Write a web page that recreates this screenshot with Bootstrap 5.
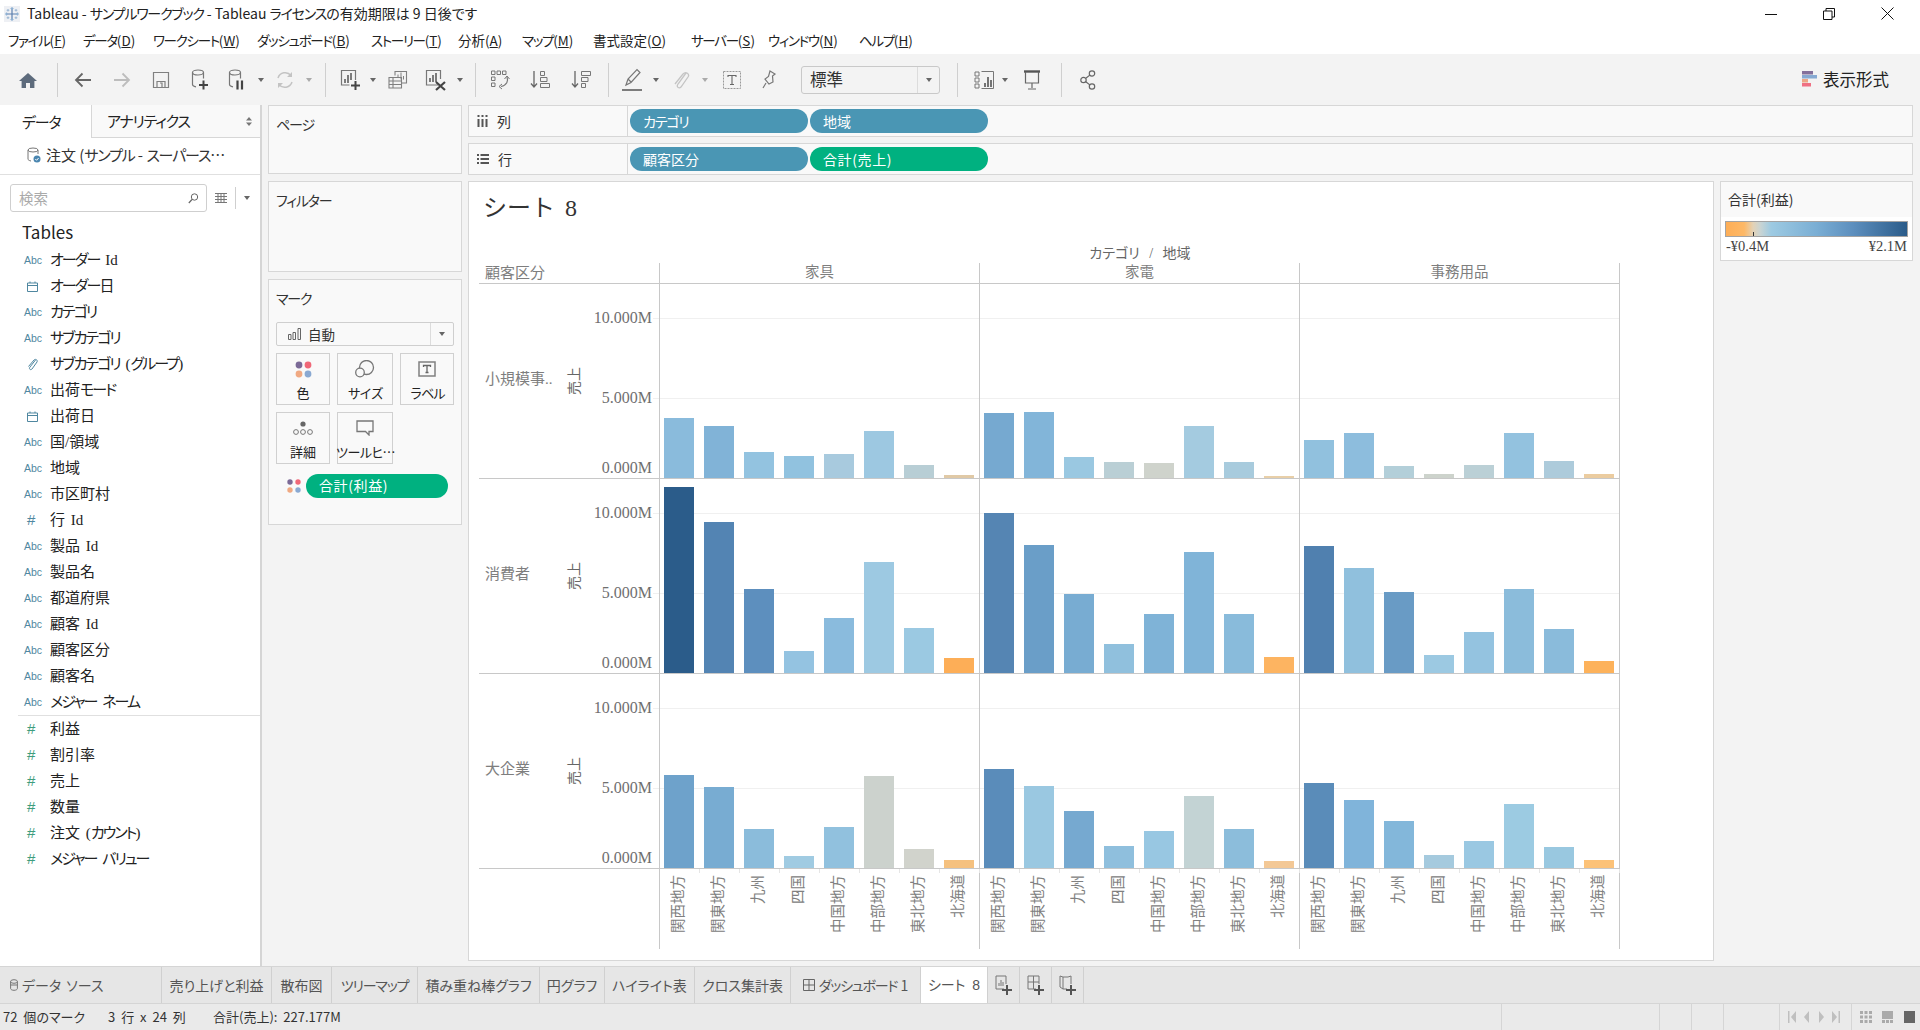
<!DOCTYPE html>
<html lang="ja">
<head>
<meta charset="utf-8">
<title>Tableau</title>
<link href="https://cdn.jsdelivr.net/npm/bootstrap@5.3.0/dist/css/bootstrap.min.css" rel="stylesheet">
<style>
html,body{height:1030px;overflow:hidden}
body{width:1920px;font-family:"Noto Sans CJK JP","Noto Sans",sans-serif;font-feature-settings:"palt";color:#333;background:#fff;font-size:14px;line-height:1.2}
svg{display:block;flex:none}
.ka{letter-spacing:-1.2px}
.title-bar{height:27px;padding-left:4px}
.title-bar .ttl{font-size:14px;margin-left:7px;color:#222}
.win-ctl{margin-left:auto;gap:46px;padding-right:26px}
.menu-bar{height:27px;padding-left:8px;display:grid;align-items:center;grid-template-columns:75px 70px 104px 114px 87px 64px 71px 98px 77px 91px auto;justify-content:start;font-size:13.5px;color:#222}
.menu-bar .ka{letter-spacing:-1.3px}
.tool-bar{height:51px;background:#f3f3f3;padding-left:8px;display:grid;align-items:center;justify-items:center;grid-template-columns:40px 18px 34px 44px 34px 44px 30px 18px 30px 18px 14px 38px 6px 44px 32px 16px 14px 36px 44px 38px 16px 32px 16px 34px 14px 40px 34px 154px 34px 20px 22px 32px 26px 28px 1fr}
.tb-sep{width:1px;height:34px;background:#cfcfcf}
.tri{width:0;height:0;border-left:3.5px solid transparent;border-right:3.5px solid transparent;border-top:4px solid #666}
.tri.off{border-top-color:#aaa}
.fit-box{justify-self:end;width:139px;height:28px;border:1px solid #c9c9c9;border-radius:3px;font-size:16.5px;padding-left:8px;color:#333}
.fit-box .cap{width:22px;align-self:stretch;border-left:1px solid #dcdcdc;margin-left:auto}
.show-me{justify-self:end;padding-right:31px;font-size:16.5px;gap:6px;color:#222}
.work{height:862px;background:#f3f3f3;border-bottom:1px solid #d5d5d5}
.side{width:262px;background:#fff;border-right:2px solid #d5d5d5;flex:none}
.tab-data{width:92px;height:33px;padding-left:22px;font-size:15px;color:#222;border-right:1px solid #d7d7d7}
.tab-ana{flex:1;height:33px;padding:0 8px 0 15px;font-size:15px;color:#222;background:#f9f9f9;border-bottom:1px solid #d7d7d7}
.src-row{height:37px;padding-left:27px;padding-bottom:2px;gap:5px;font-size:15px;border-bottom:1px solid #e0e0e0;color:#333}
.find-row{margin-top:9px;height:28px;padding-left:10px}
.find-box{width:197px;height:28px;border:1px solid #cfcfcf;border-radius:3px;padding:0 7px 0 8px;color:#aaa;font-size:14.5px}
.find-sep{height:22px}
.tbl-head{margin-top:6px;height:29px;padding-left:22px;padding-bottom:1px;font-size:17px;color:#222}
.fld{height:26px;padding-left:24px;font-family:"Liberation Serif","Noto Sans CJK JP",serif;font-size:15px;word-spacing:2px;color:#222}
.fld .ka{letter-spacing:-1.9px}
.fld .ico{width:26px;flex:none;color:#4f87a0;font-family:"Liberation Sans",sans-serif;font-size:10.5px}
.fld .ico.grn{color:#3f9d7d;font-size:15px;padding-left:3px}
.fld .ico.hsh{font-size:15px;padding-left:3px}
.fld .ico.svgi{padding-left:3px}
.fld-line{height:1px;background:#e0e0e0;margin-left:18px}
.cards{width:206px;flex:none;padding-left:6px;padding-right:6px;gap:7px}
.pane-box{background:#f9f9f9;border:1px solid #d7d7d7;color:#333;padding:10px 7px;font-size:14px}
.pb-page{height:69px}
.pb-filter{height:91px}
.pb-mark{height:246px}
.mk-sel{margin-top:15px;height:24px;background:#f9f9f9;border:1px solid #cfcfcf;border-radius:2px;padding-left:11px;font-size:13.5px;gap:7px;color:#333}
.mk-sel .cap{width:23px;align-self:stretch;border-left:1px solid #dcdcdc;margin-left:auto}
.mk-grid{display:grid;grid-template-columns:54px 56px 54px;column-gap:7px;row-gap:7px;margin-top:7px}
.mk-btn{height:52px;padding:0;border:1px solid #d0d0d0;border-radius:0;background:#f9f9f9;color:#222;font-size:13px;line-height:1.2;white-space:nowrap;--bs-btn-hover-bg:#f9f9f9}
.mk-btn .ic{height:31px;flex:none}
.mk-btn .ka{letter-spacing:-1.3px}
.mk-pill-row{margin-top:10px;padding-left:11px;gap:5px}
.chip{height:24px;border-radius:12px;color:#fff;font-size:14px;padding-left:13px}
.chip.dim{width:178px;background:#4a96b4}
.chip.grn{width:178px;background:#00b180;letter-spacing:.6px}
.chip.wide{width:142px;background:#00b180;letter-spacing:.6px}
.right-col{flex:1;padding-right:7px;gap:6px;min-width:0}
.shelf{height:32px;background:#f9f9f9;border:1px solid #d7d7d7}
.shelf .lb{width:159px;height:100%;padding-left:8px;gap:9px;border-right:1px solid #d7d7d7;font-size:14px;color:#333}
.shelf .pills{gap:2px;padding-left:2px}
.view-row{height:780px;gap:6px}
.sheet{width:1246px;background:#fff;border:1px solid #d7d7d7;flex:none}
.sheet-ttl{height:52px;padding-left:14px;font-family:"Liberation Serif","Noto Sans CJK JP",serif;font-size:24px;font-feature-settings:normal;word-spacing:4px;color:#333}
.viz{margin-left:10px;font-family:"Liberation Serif","Noto Sans CJK JP",serif;color:#7e7e7e;font-size:15px}
.viz-cap{height:29px;padding-top:11px;font-size:14px;line-height:18px;word-spacing:6px;text-align:center;margin-left:181px;width:960px;color:#666}
.viz-grid{display:grid;grid-template-columns:181px 320px 320px 320px;grid-template-rows:21px 195px 195px 195px 80px}
.hd{border-bottom:1px solid #c8c8c8;border-right:1px solid #c8c8c8;padding-top:1px;text-align:center;font-size:14.5px}
.hd.first{text-align:left;padding-left:6px;font-size:15px}
.rh{border-bottom:1px solid #c8c8c8;border-right:1px solid #c8c8c8;background:repeating-linear-gradient(to top,transparent 0 79px,#f0f0f0 79px 80px) right top/6px 100% no-repeat}
.rh .nm{width:82px;padding-left:6px;padding-bottom:4px}
.rh .at{width:28px;font-size:14px;color:#666}
.rh .at span{writing-mode:vertical-rl;text-orientation:sideways;transform:rotate(180deg)}
.rh .tk{width:63px;padding-top:24px;font-size:16px;text-align:right;color:#6f6f6f;line-height:20px}
.rh .tk div{height:20px;margin-top:60px}
.rh .tk div:first-child{margin-top:0}
.rh .tk div:last-child{margin-top:50px}
.pn{border-bottom:1px solid #c8c8c8;border-right:1px solid #c8c8c8;display:flex;align-items:flex-end;gap:10px;padding-left:4px;background:repeating-linear-gradient(to top,transparent 0 79px,#f0f0f0 79px 80px)}
.vb{display:block;width:30px;flex:none}
.xs{display:flex;border-right:1px solid #c8c8c8}
.xc{width:40px;height:100%;flex:none;display:flex;justify-content:center;background:linear-gradient(#e6e6e6,#e6e6e6) right top/1px 4px no-repeat}
.xc span{writing-mode:vertical-rl;text-orientation:sideways;transform:rotate(180deg);text-align:end;height:100%;padding-bottom:6px;margin-right:4px;font-size:14.5px;line-height:20px;color:#808080;width:20px}
.legend{width:193px;height:80px;background:#fff;border:1px solid #d7d7d7;flex:none}
.lg-head{height:35px;background:#f9f9f9;padding-left:7px;font-size:14px;color:#333}
.lg-bar{height:16px;margin:4px 4px 0 4px;border:1px solid #a3a3a3;background:linear-gradient(to right,#fdae57 0,#fdb866 10%,#e3d2b6 15%,#c9d4d3 19%,#9dcae2 25%,#7aaed4 50%,#5d8fbe 70%,#2b5c8a 100%);position:relative}
.lg-tick{position:absolute;left:27px;bottom:0;width:1px;height:4px;background:#333}
.lg-lab{padding:0 5px;font-family:"Liberation Serif",serif;font-size:14.5px;color:#444;line-height:18px}
.tab-bar{height:37px;background:#e6e6e6;border-bottom:1px solid #d5d5d5;display:grid;grid-template-columns:162px 110px 60px 86px 122px 65px 90px 96px 130px 67px 32px 32px 32px 1fr;font-size:14px;color:#555}
.tab-bar>div{border-right:1px solid #d0d0d0;display:flex;align-items:center;justify-content:center;gap:4px}
.tab-bar>div:last-child{border-right:0}
.tab-bar .cur{background:#fff;color:#555;word-spacing:3px;font-family:"Liberation Sans","Noto Sans CJK JP",sans-serif}
.tab-bar .src{justify-content:flex-start;padding-left:10px;gap:4px;word-spacing:2px}
.st-bar{height:26px;background:#eaeaea;padding-left:3px;display:grid;grid-template-columns:105px 105px 1288px 158px 32px 32px 56px 72px 1fr;font-size:13px;word-spacing:3px;color:#333}
.st-bar>div{display:flex;align-items:center}
.st-bar .cell{border-left:1px solid #d5d5d5}
</style>
</head>
<body class="d-flex flex-column">

<div class="title-bar d-flex align-items-center">
  <svg width="16" height="16" viewBox="0 0 16 16"><rect width="16" height="16" fill="#eef0f4"/><g stroke-width="1.2"><path d="M8 3v10M3 8h10" stroke="#5b7fae"/><path d="M8 1v3M6.5 2.5h3M8 12v3M6.5 13.5h3" stroke="#8fb1d3"/><path d="M1 8h3M2.5 6.5v3M12 8h3M13.5 6.5v3" stroke="#8fb1d3"/><path d="M4 3v2.6M2.7 4.3h2.6M12 3v2.6M10.7 4.3h2.6M4 10.4V13M2.7 11.7h2.6M12 10.4V13M10.7 11.7h2.6" stroke="#a4bcd6"/></g></svg>
  <span class="ttl">Tableau - <span class="ka">サンプルワークブック</span> - Tableau <span class="ka">ライセンス</span>の有効期限は 9 日後です</span>
  <div class="win-ctl d-flex align-items-center">
    <svg width="12" height="12" viewBox="0 0 12 12"><path d="M0 6.5h12" stroke="#111" stroke-width="1"/></svg>
    <svg width="12" height="12" viewBox="0 0 12 12"><path d="M.5 3h8.500v8.500H.5zM3 3V.5h8.500V9H9" fill="none" stroke="#111"/></svg>
    <svg width="13" height="13" viewBox="0 0 13 13"><path d="M.5.5l12 12M12.5.5l-12 12" stroke="#111"/></svg>
  </div>
</div>

<div class="menu-bar">
  <span><span class="ka">ファイル</span>(<u>F</u>)</span><span><span class="ka">データ</span>(<u>D</u>)</span><span><span class="ka">ワークシート</span>(<u>W</u>)</span><span><span class="ka">ダッシュボード</span>(<u>B</u>)</span><span><span class="ka">ストーリー</span>(<u>T</u>)</span><span>分析(<u>A</u>)</span><span><span class="ka">マップ</span>(<u>M</u>)</span><span>書式設定(<u>O</u>)</span><span><span class="ka">サーバー</span>(<u>S</u>)</span><span><span class="ka">ウィンドウ</span>(<u>N</u>)</span><span><span class="ka">ヘルプ</span>(<u>H</u>)</span>
</div>

<div class="tool-bar">
  <svg width="20" height="20" viewBox="0 0 20 20"><path d="M10 3l9 8h-2.6v7H12v-5H8v5H3.6v-7H1z" fill="#5d6b7c"/></svg>
  <div class="tb-sep"></div>
  <svg width="18" height="16" viewBox="0 0 18 16"><path d="M17 8H2M8.500 1.500L2 8l6.500 6.500" fill="none" stroke="#666" stroke-width="1.800"/></svg>
  <svg width="18" height="16" viewBox="0 0 18 16"><path d="M1 8h15M9.500 1.500L16 8l-6.500 6.500" fill="none" stroke="#bdbdbd" stroke-width="1.800"/></svg>
  <svg width="18" height="18" viewBox="0 0 18 18"><path d="M1.500 1.500h15v15h-15zM5 16.500v-6h8v6M8 12h2v4" fill="none" stroke="#808080" stroke-width="1.200"/></svg>
  <svg width="20" height="22" viewBox="0 0 20 22"><ellipse cx="8" cy="3.500" rx="5.500" ry="2.500" fill="none" stroke="#777" stroke-width="1.200"/><path d="M2.500 3.500v12c0 1.400 2 2 3.500 2.300M13.500 3.500v6" fill="none" stroke="#777" stroke-width="1.200"/><path d="M9 16h9M13.500 11.500v9" stroke="#444" stroke-width="2"/></svg>
  <svg width="20" height="22" viewBox="0 0 20 22"><ellipse cx="8" cy="3.500" rx="5.500" ry="2.500" fill="none" stroke="#777" stroke-width="1.200"/><path d="M2.500 3.500v12c0 1.400 2 2 3.500 2.300M13.500 3.500v6" fill="none" stroke="#777" stroke-width="1.200"/><path d="M10.500 11.500v9M15 11.500v9" stroke="#444" stroke-width="2.200"/></svg>
  <div class="tri"></div>
  <svg width="20" height="20" viewBox="0 0 20 20"><path d="M3 8a7.500 7.500 0 0 1 13-2.500M17 12a7.500 7.500 0 0 1-13 2.500" fill="none" stroke="#c3c3c3" stroke-width="1.500"/><path d="M17 2v5h-5zM3 18v-5h5z" fill="#c3c3c3"/></svg>
  <div class="tri off"></div>
  <div class="tb-sep"></div>
  <svg width="22" height="22" viewBox="0 0 22 22"><path d="M15.500 11V1.500h-14V16h8" fill="none" stroke="#777" stroke-width="1.200"/><path d="M5 14V10M8 14V6M11 11V4" stroke="#555" stroke-width="1.500"/><path d="M11 16.500h9M15.500 12v9" stroke="#444" stroke-width="2"/></svg>
  <div class="tri"></div>
  <svg width="20" height="20" viewBox="0 0 20 20"><path d="M7 5.500V1.500h11.500V13H14" fill="none" stroke="#808080" stroke-width="1.100"/><path d="M10 4.500v3M13 2.500v7M15.500 6v3.500" stroke="#808080" stroke-width="1"/><path d="M1 7.500h12.500V18H1zM1 11h12.500M1 14.500h12.500M5 7.500V18" fill="none" stroke="#808080" stroke-width="1.100"/></svg>
  <svg width="22" height="22" viewBox="0 0 22 22"><path d="M13 16H1.500V1.500h14V10" fill="none" stroke="#777" stroke-width="1.200"/><path d="M5 13V9M8 13V6M11 13V4" stroke="#555" stroke-width="1.500"/><path d="M11 13l9 8M20 13l-9 8" stroke="#444" stroke-width="2.200"/></svg>
  <div class="tri"></div>
  <div class="tb-sep"></div>
  <svg width="20" height="20" viewBox="0 0 20 20"><path d="M1.500 1h3.500v3.500H1.500zM7 1h3.500v3.500H7zM12.500 1H16v3.500h-3.500zM1.500 7H5v3.500H1.500zM1.500 13H5v3.500H1.500z" fill="none" stroke="#777"/><path d="M17 7c1.500 4 0 8-6 9.500" fill="none" stroke="#777" stroke-width="1.200"/><path d="M14.500 9l2.500-3 2.500 3M12 14l-3 2.500 3 2.500" fill="none" stroke="#777"/></svg>
  <svg width="20" height="20" viewBox="0 0 20 20"><path d="M4 1v16M1 13.500L4 17l3-3.500" fill="none" stroke="#666" stroke-width="1.300"/><path d="M10.500 1.500h4v4h-4zM10.500 7.500h6.500v4h-6.500zM10.500 13.500h9v4h-9z" fill="none" stroke="#777"/></svg>
  <svg width="20" height="20" viewBox="0 0 20 20"><path d="M4 1v16M1 13.500L4 17l3-3.500" fill="none" stroke="#666" stroke-width="1.300"/><path d="M10.500 1.500h9v4h-9zM10.500 7.500h6.500v4h-6.500zM10.500 13.500h4v4h-4z" fill="none" stroke="#777"/></svg>
  <div class="tb-sep"></div>
  <svg width="22" height="24" viewBox="0 0 22 24"><path d="M5 17l2-6L16 1.500l3 3L10 14.500zM7 11l3 3" fill="none" stroke="#777" stroke-width="1.200"/><path d="M1 22h20" stroke="#555" stroke-width="1.500"/></svg>
  <div class="tri"></div>
  <svg width="18" height="22" viewBox="0 0 18 22"><path d="M14 4L6 15c-2 3 1 5 3 3l7-10c2-3-2-6-5-3L3 15" fill="none" stroke="#c4c4c4" stroke-width="1.300"/></svg>
  <div class="tri off"></div>
  <svg width="18" height="18" viewBox="0 0 18 18"><rect x=".5" y=".5" width="17" height="17" fill="none" stroke="#999" stroke-dasharray="2 1"/><path d="M5 6V4.500h8V6M9 4.500v9M7 13.500h4" fill="none" stroke="#666" stroke-width="1.100"/></svg>
  <svg width="16" height="20" viewBox="0 0 16 20"><path d="M9 1l5 3-2.500 2 .5 6-4 2-4-5 3.500-2.500zM5 13l-3 5" fill="none" stroke="#777" stroke-width="1.200"/></svg>
  <div class="fit-box d-flex align-items-center"><span>標準</span><span class="cap d-flex align-items-center justify-content-center"><span class="tri"></span></span></div>
  <div class="tb-sep"></div>
  <svg width="20" height="18" viewBox="0 0 20 18"><path d="M1 1h4v4H1zM1 7h4v4H1zM1 13h4v4H1zM7.500 .5H19.500V17.500H7.500" fill="none" stroke="#777"/><path d="M11 16v-4M14 16V6M17 16v-7" stroke="#555" stroke-width="1.600"/></svg>
  <div class="tri"></div>
  <svg width="18" height="20" viewBox="0 0 18 20"><path d="M1 1.500h16" stroke="#555" stroke-width="2.400"/><path d="M2.500 2v11h13V2M9 13v5M5 19h8" fill="none" stroke="#666" stroke-width="1.200"/></svg>
  <div class="tb-sep"></div>
  <svg width="16" height="20" viewBox="0 0 16 20"><circle cx="12" cy="3.500" r="2.700" fill="none" stroke="#666" stroke-width="1.200"/><circle cx="3.500" cy="10" r="2.700" fill="none" stroke="#666" stroke-width="1.200"/><circle cx="12" cy="16.500" r="2.700" fill="none" stroke="#666" stroke-width="1.200"/><path d="M5.800 8.300l4-3.200M5.800 11.700l4 3.200" stroke="#666" stroke-width="1.200"/></svg>
  <div class="show-me d-flex align-items-center">
    <svg width="15" height="16" viewBox="0 0 15 16"><rect width="11" height="3.500" fill="#83709b"/><rect y="4" width="15" height="3.500" fill="#86a9d2"/><rect y="8" width="6" height="3.500" fill="#eda786"/><rect y="12" width="9" height="3.500" fill="#ef7083"/></svg>
    <span>表示形式</span>
  </div>
</div>

<div class="work d-flex">
  <aside class="side">
    <div class="d-flex">
      <div class="tab-data d-flex align-items-center"><span class="ka">データ</span></div>
      <div class="tab-ana d-flex align-items-center justify-content-between"><span class="ka">アナリティクス</span><svg width="6" height="9" viewBox="0 0 6 9"><path d="M3 0l3 3.500H0zM3 9l3-3.500H0z" fill="#777"/></svg></div>
    </div>
    <div class="src-row d-flex align-items-center">
      <svg width="14" height="16" viewBox="0 0 14 16"><ellipse cx="6" cy="3" rx="5" ry="2" fill="none" stroke="#777"/><path d="M1 3v9c0 1 1 1.500 3 2M11 3v4" fill="none" stroke="#777"/><circle cx="10" cy="12" r="3.500" fill="#4a86b0"/><path d="M8.300 12l1.300 1.300 2-2.300" fill="none" stroke="#fff"/></svg>
      <span>注文 (<span class="ka">サンプル</span> - <span class="ka">スーパース</span>…</span>
    </div>
    <div class="find-row d-flex align-items-center">
      <div class="find-box d-flex align-items-center justify-content-between"><span>検索</span><svg width="11" height="11" viewBox="0 0 11 11"><circle cx="6.500" cy="4" r="3.200" fill="none" stroke="#666"/><path d="M4 6.500L.8 10" stroke="#666" stroke-width="1.200"/></svg></div>
      <svg class="ms-2" width="12" height="10" viewBox="0 0 12 10"><path d="M0 .5h12M0 3.500h12M0 6.500h12M0 9.500h12M3 0v10M6 0v10M9 0v10" stroke="#777"/></svg>
      <div class="tb-sep find-sep ms-2"></div>
      <div class="tri ms-2"></div>
    </div>
    <div class="tbl-head d-flex align-items-center">Tables</div>
    <div class="fld d-flex align-items-center"><span class="ico">Abc</span><span><span class="ka">オーダー</span> Id</span></div>
    <div class="fld d-flex align-items-center"><span class="ico svgi"><svg width="11" height="11" viewBox="0 0 11 11"><path d="M.5 2h10v8.500H.5zM.5 4.500h10M3 .5V2M8 .5V2" fill="none" stroke="#4f87a0"/></svg></span><span><span class="ka">オーダー</span>日</span></div>
    <div class="fld d-flex align-items-center"><span class="ico">Abc</span><span class="ka">カテゴリ</span></div>
    <div class="fld d-flex align-items-center"><span class="ico">Abc</span><span class="ka">サブカテゴリ</span></div>
    <div class="fld d-flex align-items-center"><span class="ico svgi"><svg width="11" height="13" viewBox="0 0 11 13"><path d="M8.500 2L3 9c-1.500 2 .5 3.500 2 2l5-7c1-2-1.500-3.500-3-2L1.500 8.500" fill="none" stroke="#4f87a0"/></svg></span><span><span class="ka">サブカテゴリ</span> (<span class="ka">グループ</span>)</span></div>
    <div class="fld d-flex align-items-center"><span class="ico">Abc</span><span>出荷<span class="ka">モード</span></span></div>
    <div class="fld d-flex align-items-center"><span class="ico svgi"><svg width="11" height="11" viewBox="0 0 11 11"><path d="M.5 2h10v8.500H.5zM.5 4.500h10M3 .5V2M8 .5V2" fill="none" stroke="#4f87a0"/></svg></span>出荷日</div>
    <div class="fld d-flex align-items-center"><span class="ico">Abc</span>国/領域</div>
    <div class="fld d-flex align-items-center"><span class="ico">Abc</span>地域</div>
    <div class="fld d-flex align-items-center"><span class="ico">Abc</span>市区町村</div>
    <div class="fld d-flex align-items-center"><span class="ico hsh">#</span>行 Id</div>
    <div class="fld d-flex align-items-center"><span class="ico">Abc</span>製品 Id</div>
    <div class="fld d-flex align-items-center"><span class="ico">Abc</span>製品名</div>
    <div class="fld d-flex align-items-center"><span class="ico">Abc</span>都道府県</div>
    <div class="fld d-flex align-items-center"><span class="ico">Abc</span>顧客 Id</div>
    <div class="fld d-flex align-items-center"><span class="ico">Abc</span>顧客区分</div>
    <div class="fld d-flex align-items-center"><span class="ico">Abc</span>顧客名</div>
    <div class="fld d-flex align-items-center"><span class="ico">Abc</span><span><span class="ka">メジャー</span> <span class="ka">ネーム</span></span></div>
    <div class="fld-line"></div>
    <div class="fld d-flex align-items-center"><span class="ico grn">#</span>利益</div>
    <div class="fld d-flex align-items-center"><span class="ico grn">#</span>割引率</div>
    <div class="fld d-flex align-items-center"><span class="ico grn">#</span>売上</div>
    <div class="fld d-flex align-items-center"><span class="ico grn">#</span>数量</div>
    <div class="fld d-flex align-items-center"><span class="ico grn">#</span><span>注文 (<span class="ka">カウント</span>)</span></div>
    <div class="fld d-flex align-items-center"><span class="ico grn">#</span><span><span class="ka">メジャー</span> <span class="ka">バリュー</span></span></div>
  </aside>

  <div class="cards d-flex flex-column">
    <div class="pane-box pb-page"><span class="ka">ページ</span></div>
    <div class="pane-box pb-filter"><span class="ka">フィルター</span></div>
    <div class="pane-box pb-mark">
      <div><span class="ka">マーク</span></div>
      <div class="mk-sel d-flex align-items-center">
        <svg width="13" height="12" viewBox="0 0 13 12"><path d="M.5 6.500h2.500v5H.5zM5 4.500h2.500v7H5zM10 .5h2.500v11H10z" fill="none" stroke="#666"/></svg>
        <span>自動</span>
        <span class="cap d-flex align-items-center justify-content-center"><span class="tri"></span></span>
      </div>
      <div class="mk-grid">
        <button class="btn mk-btn d-flex flex-column align-items-center"><span class="ic d-flex align-items-center"><svg width="17" height="17" viewBox="0 0 17 17"><circle cx="4" cy="4" r="3.400" fill="#7b6a97"/><circle cx="13" cy="4" r="3.400" fill="#f06878"/><circle cx="4" cy="13" r="3.400" fill="#f0a982"/><circle cx="13" cy="13" r="3.400" fill="#8aa9d2"/></svg></span>色</button>
        <button class="btn mk-btn d-flex flex-column align-items-center"><span class="ic d-flex align-items-center"><svg width="20" height="18" viewBox="0 0 20 18"><circle cx="11.500" cy="7.500" r="7" fill="none" stroke="#777" stroke-width="1.300"/><circle cx="5" cy="12.500" r="4.300" fill="#f9f9f9" stroke="#777" stroke-width="1.300"/></svg></span><span class="ka">サイズ</span></button>
        <button class="btn mk-btn d-flex flex-column align-items-center"><span class="ic d-flex align-items-center"><svg width="18" height="16" viewBox="0 0 18 16"><rect x="1" y="1" width="16" height="14" fill="none" stroke="#808080" stroke-width="1.500"/><path d="M5.500 6V4.500h7V6M9 4.500V11.500M7.500 11.500h3" fill="none" stroke="#666" stroke-width="1.300"/></svg></span><span class="ka">ラベル</span></button>
        <button class="btn mk-btn d-flex flex-column align-items-center"><span class="ic d-flex align-items-center"><svg width="20" height="16" viewBox="0 0 20 16"><circle cx="10" cy="4" r="2.600" fill="#666"/><circle cx="3" cy="12" r="2.400" fill="none" stroke="#777"/><circle cx="10" cy="12" r="2.400" fill="none" stroke="#777"/><circle cx="17" cy="12" r="2.400" fill="none" stroke="#777"/></svg></span>詳細</button>
        <button class="btn mk-btn d-flex flex-column align-items-center"><span class="ic d-flex align-items-center"><svg width="18" height="16" viewBox="0 0 18 16"><path d="M1 1h16v10.500h-4v3.500l-3.500-3.500H1z" fill="none" stroke="#777" stroke-width="1.300"/></svg></span><span class="ka">ツールヒ…</span></button>
      </div>
      <div class="mk-pill-row d-flex align-items-center">
        <svg width="14" height="14" viewBox="0 0 14 14"><circle cx="3" cy="3" r="2.700" fill="#7b6a97"/><circle cx="11" cy="3" r="2.700" fill="#f06878"/><circle cx="3" cy="11" r="2.700" fill="#f0a982"/><circle cx="11" cy="11" r="2.700" fill="#8aa9d2"/></svg>
        <div class="chip wide d-flex align-items-center">合計(利益)</div>
      </div>
    </div>
  </div>

  <div class="right-col d-flex flex-column">
    <div class="shelf d-flex align-items-center">
      <div class="lb d-flex align-items-center"><svg width="11" height="12" viewBox="0 0 11 12"><path d="M1.500 4v8M5.500 4v8M9.500 4v8" stroke="#555" stroke-width="2"/><path d="M1.500 0v2M5.500 0v2M9.500 0v2" stroke="#555" stroke-width="2"/></svg>列</div>
      <div class="pills d-flex"><div class="chip dim d-flex align-items-center"><span class="ka">カテゴリ</span></div><div class="chip dim d-flex align-items-center">地域</div></div>
    </div>
    <div class="shelf d-flex align-items-center">
      <div class="lb d-flex align-items-center"><svg width="12" height="10" viewBox="0 0 12 10"><path d="M0 1h2M3.500 1H12M0 5h2M3.500 5H12M0 9h2M3.500 9H12" stroke="#555" stroke-width="2"/></svg>行</div>
      <div class="pills d-flex"><div class="chip dim d-flex align-items-center">顧客区分</div><div class="chip grn d-flex align-items-center">合計(売上)</div></div>
    </div>
    <div class="view-row d-flex align-items-start">
      <section class="sheet h-100">
        <div class="sheet-ttl d-flex align-items-center">シート 8</div>
        <div class="viz">
          <div class="viz-cap">カテゴリ / 地域</div>
          <div class="viz-grid">
            <div class="hd first">顧客区分</div><div class="hd">家具</div><div class="hd">家電</div><div class="hd">事務用品</div>

            <div class="rh d-flex"><div class="nm d-flex align-items-center">小規模事..</div><div class="at d-flex align-items-center justify-content-center"><span>売上</span></div><div class="tk"><div>10.000M</div><div>5.000M</div><div>0.000M</div></div></div>
            <div class="pn"><i class="vb" style="height:60px;background:#8abbdc"></i><i class="vb" style="height:52px;background:#81b3d7"></i><i class="vb" style="height:26px;background:#93c3e0"></i><i class="vb" style="height:22px;background:#91c2df"></i><i class="vb" style="height:24px;background:#a8cade"></i><i class="vb" style="height:47px;background:#9dc8e1"></i><i class="vb" style="height:13px;background:#b8ced5"></i><i class="vb" style="height:3px;background:#e0c9a6"></i></div>
            <div class="pn"><i class="vb" style="height:65px;background:#76a9d0"></i><i class="vb" style="height:66px;background:#82b5d9"></i><i class="vb" style="height:21px;background:#9ac8e1"></i><i class="vb" style="height:16px;background:#bacfd5"></i><i class="vb" style="height:15px;background:#cfd3cc"></i><i class="vb" style="height:52px;background:#a4cbe0"></i><i class="vb" style="height:16px;background:#a8cbdd"></i><i class="vb" style="height:2px;background:#e8cfa8"></i></div>
            <div class="pn"><i class="vb" style="height:38px;background:#91c1de"></i><i class="vb" style="height:45px;background:#8dbddd"></i><i class="vb" style="height:12px;background:#b3cfd9"></i><i class="vb" style="height:4px;background:#cdd3cc"></i><i class="vb" style="height:13px;background:#bbd0d6"></i><i class="vb" style="height:45px;background:#93c2df"></i><i class="vb" style="height:17px;background:#adcbdb"></i><i class="vb" style="height:4px;background:#ebcca0"></i></div>

            <div class="rh d-flex"><div class="nm d-flex align-items-center">消費者</div><div class="at d-flex align-items-center justify-content-center"><span>売上</span></div><div class="tk"><div>10.000M</div><div>5.000M</div><div>0.000M</div></div></div>
            <div class="pn"><i class="vb" style="height:186px;background:#2b5c8a"></i><i class="vb" style="height:151px;background:#5384b3"></i><i class="vb" style="height:84px;background:#5d8fbe"></i><i class="vb" style="height:22px;background:#94c3e1"></i><i class="vb" style="height:55px;background:#8abbdd"></i><i class="vb" style="height:111px;background:#9dc9e2"></i><i class="vb" style="height:45px;background:#9bc9e2"></i><i class="vb" style="height:15px;background:#fdae57"></i></div>
            <div class="pn"><i class="vb" style="height:160px;background:#5585b3"></i><i class="vb" style="height:128px;background:#6a9ec8"></i><i class="vb" style="height:79px;background:#78acd2"></i><i class="vb" style="height:29px;background:#90c0dd"></i><i class="vb" style="height:59px;background:#7fb3d7"></i><i class="vb" style="height:121px;background:#80b4d8"></i><i class="vb" style="height:59px;background:#89bbdb"></i><i class="vb" style="height:16px;background:#fdb461"></i></div>
            <div class="pn"><i class="vb" style="height:127px;background:#5080af"></i><i class="vb" style="height:105px;background:#90c0dd"></i><i class="vb" style="height:81px;background:#699bc5"></i><i class="vb" style="height:18px;background:#9cc9e2"></i><i class="vb" style="height:41px;background:#94c3e0"></i><i class="vb" style="height:84px;background:#8bbcdb"></i><i class="vb" style="height:44px;background:#8abbdb"></i><i class="vb" style="height:12px;background:#fdb25b"></i></div>

            <div class="rh d-flex"><div class="nm d-flex align-items-center">大企業</div><div class="at d-flex align-items-center justify-content-center"><span>売上</span></div><div class="tk"><div>10.000M</div><div>5.000M</div><div>0.000M</div></div></div>
            <div class="pn"><i class="vb" style="height:93px;background:#6ea2cb"></i><i class="vb" style="height:81px;background:#78acd2"></i><i class="vb" style="height:39px;background:#8bbcdb"></i><i class="vb" style="height:12px;background:#a0cbe2"></i><i class="vb" style="height:41px;background:#91c1de"></i><i class="vb" style="height:92px;background:#ccd2cd"></i><i class="vb" style="height:19px;background:#d1d3cc"></i><i class="vb" style="height:8px;background:#f5c17f"></i></div>
            <div class="pn"><i class="vb" style="height:99px;background:#5a8cba"></i><i class="vb" style="height:82px;background:#9ac8e1"></i><i class="vb" style="height:57px;background:#76a9d0"></i><i class="vb" style="height:22px;background:#8fbfdd"></i><i class="vb" style="height:37px;background:#98c7e2"></i><i class="vb" style="height:72px;background:#c3d3d4"></i><i class="vb" style="height:39px;background:#8cbddb"></i><i class="vb" style="height:7px;background:#f3c896"></i></div>
            <div class="pn"><i class="vb" style="height:85px;background:#5a8cb9"></i><i class="vb" style="height:68px;background:#80b4da"></i><i class="vb" style="height:47px;background:#83b7da"></i><i class="vb" style="height:13px;background:#a5cade"></i><i class="vb" style="height:27px;background:#9ac8e2"></i><i class="vb" style="height:64px;background:#9ccbe2"></i><i class="vb" style="height:21px;background:#99c8e0"></i><i class="vb" style="height:8px;background:#fcc278"></i></div>

            <div class="xs"></div>
            <div class="xs"><div class="xc"><span>関西地方</span></div><div class="xc"><span>関東地方</span></div><div class="xc"><span>九州</span></div><div class="xc"><span>四国</span></div><div class="xc"><span>中国地方</span></div><div class="xc"><span>中部地方</span></div><div class="xc"><span>東北地方</span></div><div class="xc"><span>北海道</span></div></div>
            <div class="xs"><div class="xc"><span>関西地方</span></div><div class="xc"><span>関東地方</span></div><div class="xc"><span>九州</span></div><div class="xc"><span>四国</span></div><div class="xc"><span>中国地方</span></div><div class="xc"><span>中部地方</span></div><div class="xc"><span>東北地方</span></div><div class="xc"><span>北海道</span></div></div>
            <div class="xs"><div class="xc"><span>関西地方</span></div><div class="xc"><span>関東地方</span></div><div class="xc"><span>九州</span></div><div class="xc"><span>四国</span></div><div class="xc"><span>中国地方</span></div><div class="xc"><span>中部地方</span></div><div class="xc"><span>東北地方</span></div><div class="xc"><span>北海道</span></div></div>
          </div>
        </div>
      </section>
      <section class="legend">
        <div class="lg-head d-flex align-items-center">合計(利益)</div>
        <div class="lg-bar"><div class="lg-tick"></div></div>
        <div class="lg-lab d-flex justify-content-between"><span>-¥0.4M</span><span>¥2.1M</span></div>
      </section>
    </div>
  </div>
</div>

<div class="tab-bar">
  <div class="src"><svg width="8" height="12" viewBox="0 0 8 12"><ellipse cx="4" cy="2.500" rx="3.400" ry="1.800" fill="none" stroke="#777"/><path d="M.6 2.500v7c0 1 1.500 1.800 3.400 1.800s3.400-.8 3.400-1.800v-7M.6 6h6.800" fill="none" stroke="#777"/></svg><span>データ ソース</span></div>
  <div>売り上げと利益</div><div>散布図</div><div><span class="ka">ツリーマップ</span></div><div>積み重ね棒グラフ</div><div>円グラフ</div><div>ハイライト表</div><div>クロス集計表</div>
  <div><svg width="12" height="12" viewBox="0 0 12 12"><path d="M.5.500h11v11H.5zM6 .5v11M.5 6h11" fill="none" stroke="#666"/></svg><span><span class="ka">ダッシュボード</span> 1</span></div>
  <div class="cur">シート 8</div>
  <div><svg width="18" height="20" viewBox="0 0 18 20"><path d="M9 14H1V1h10v8" fill="none" stroke="#777"/><path d="M4 11V8M6 11V5M8 11V7" stroke="#777"/><path d="M7 15h10M12 10v10" stroke="#555" stroke-width="2"/></svg></div>
  <div><svg width="18" height="20" viewBox="0 0 18 20"><path d="M9 14H1V1h11v8M6.500 1v13M1 7h11" fill="none" stroke="#777"/><path d="M7 15h10M12 10v10" stroke="#555" stroke-width="2"/></svg></div>
  <div><svg width="18" height="20" viewBox="0 0 18 20"><path d="M1 1l3 1h5l3-1v8M1 1v11l3 2h4M4 2v12" fill="none" stroke="#777"/><path d="M7 15h10M12 10v10" stroke="#555" stroke-width="2"/></svg></div>
  <div></div>
</div>

<div class="st-bar">
  <div>72 個のマーク</div><div>3 行 x 24 列</div><div>合計(売上): 227.177M</div>
  <div class="cell"></div><div class="cell"></div><div class="cell"></div><div class="cell"></div>
  <div class="cell"><svg class="ms-2" width="56" height="12" viewBox="0 0 56 12"><g fill="#bfbfbf"><path d="M0 0h1.500v12H0zM8 0v12L3 6zM21 0v12l-5-6zM31 0v12l5-6zM44 0v12l5-6zM50.500 0H52v12h-1.500z"/></g></svg></div>
  <div class="cell"><svg class="ms-2" width="56" height="12" viewBox="0 0 56 12"><g fill="#aaa"><path d="M0 0h3v3H0zM4.500 0h3v3h-3zM9 0h3v3H9zM0 4.500h3v3H0zM4.500 4.500h3v3h-3zM9 4.500h3v3H9zM0 9h3v3H0zM4.500 9h3v3h-3zM9 9h3v3H9z"/><path d="M22 0h11v8H22zM22 9h3v3h-3zM26 9h3v3h-3zM30 9h3v3h-3z"/></g><rect x="44" y="0" width="11" height="12" fill="#666"/></svg></div>
</div>

</body>
</html>
